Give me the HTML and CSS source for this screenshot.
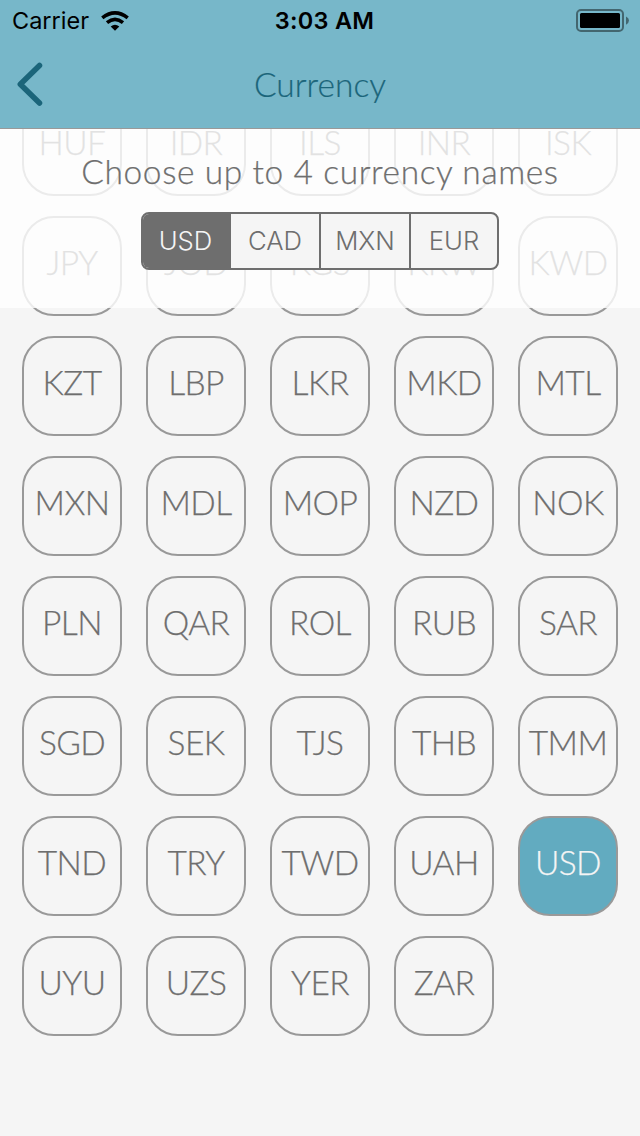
FILE: index.html
```html
<!DOCTYPE html>
<html lang="en">
<head>
<meta charset="utf-8">
<title>Currency</title>
<link rel="stylesheet" href="styles.css">
</head>
<body>
<div class="screen">
  <header class="header">
    <div class="status">
      <div class="carrier">
        <span class="carrier-name">Carrier</span>
        <svg class="wifi" width="28" height="20" viewBox="0 0 28 20">
          <path d="M14 19.8 L9.7 15.5 Q14 12 18.300 15.500 Z"/>
          <path class="arc" d="M6 11.600 Q14 5.100 22 11.600"/>
          <path class="arc" d="M1.300 6.900 Q14 -3.100 26.700 6.900"/>
        </svg>
      </div>
      <span class="time">3:03 AM</span>
      <svg class="battery" width="54" height="24" viewBox="0 0 54 24">
        <rect class="shell" x="1" y="1" width="46" height="21" rx="4"/>
        <rect x="4" y="4" width="40" height="15" rx="1.500"/>
        <path class="cap" d="M50 7.500 Q53 9 53 11.500 Q53 14 50 15.800 Z"/>
      </svg>
    </div>
    <div class="navbar">
      <svg class="back" width="28" height="44" viewBox="0 0 28 44"><path d="M23.500 3.500 L4.300 22.300 L23.500 41"/></svg>
      <h1 class="title">Currency</h1>
    </div>
  </header>
  <main class="content">
    <div class="grid">
      <div class="tile"><span>HUF</span></div><div class="tile"><span>IDR</span></div><div class="tile"><span>ILS</span></div><div class="tile"><span>INR</span></div><div class="tile"><span>ISK</span></div>
      <div class="tile"><span>JPY</span></div><div class="tile"><span>JOD</span></div><div class="tile"><span>KGS</span></div><div class="tile"><span>KRW</span></div><div class="tile"><span>KWD</span></div>
      <div class="tile"><span>KZT</span></div><div class="tile"><span>LBP</span></div><div class="tile"><span>LKR</span></div><div class="tile"><span>MKD</span></div><div class="tile"><span>MTL</span></div>
      <div class="tile"><span>MXN</span></div><div class="tile"><span>MDL</span></div><div class="tile"><span>MOP</span></div><div class="tile"><span>NZD</span></div><div class="tile"><span>NOK</span></div>
      <div class="tile"><span>PLN</span></div><div class="tile"><span>QAR</span></div><div class="tile"><span>ROL</span></div><div class="tile"><span>RUB</span></div><div class="tile"><span>SAR</span></div>
      <div class="tile"><span>SGD</span></div><div class="tile"><span>SEK</span></div><div class="tile"><span>TJS</span></div><div class="tile"><span>THB</span></div><div class="tile"><span>TMM</span></div>
      <div class="tile"><span>TND</span></div><div class="tile"><span>TRY</span></div><div class="tile"><span>TWD</span></div><div class="tile"><span>UAH</span></div><div class="tile selected"><span>USD</span></div>
      <div class="tile"><span>UYU</span></div><div class="tile"><span>UZS</span></div><div class="tile"><span>YER</span></div><div class="tile"><span>ZAR</span></div>
    </div>
    <section class="panel">
      <p class="prompt">Choose up to 4 currency names</p>
      <div class="segments">
        <span class="segment active">USD</span><span class="segment">CAD</span><span class="segment">MXN</span><span class="segment">EUR</span>
      </div>
    </section>
  </main>
</div>
</body>
</html>
```
FILE: styles.css
```css
* { box-sizing: border-box; }
body { margin: 0; background: #f5f5f5; }
.screen {
  width: 640px; height: 1136px; overflow: hidden;
  display: flex; flex-direction: column;
  font-family: Lato, sans-serif; font-weight: 300; color: #6e6e6e;
}
.header { height: 129px; background: #77b7c9; border-bottom: 1px solid #999; flex: none; }
.status {
  height: 40px; padding: 1px 10px 0 12px; color: #000;
  display: grid; grid-template-columns: 1fr auto 1fr; align-items: center;
  font-family: Inter, sans-serif; font-size: 23.500px; line-height: 40px;
}
.carrier { display: flex; align-items: center; gap: 12px; font-weight: 400; letter-spacing: 0; }
.arc { fill: none; stroke: #000; stroke-width: 3.600; }
.time { font-weight: 600; letter-spacing: 0.300px; padding-left: 7px; }
.battery { justify-self: end; }
.shell { fill: none; stroke: #43666f; stroke-width: 2; }
.cap { fill: #43666f; }
.navbar {
  height: 88px; padding: 0 16px;
  display: grid; grid-template-columns: 28px 1fr 28px; align-items: center;
}
.back path { fill: none; stroke: #1b657a; stroke-width: 5.500; stroke-linecap: round; stroke-linejoin: round; }
.title {
  margin: 0; text-align: center; font-size: 33.500px; font-weight: 300; line-height: 88px;
  height: 88px; color: #1b657a; -webkit-text-stroke: 0.200px;
}
.content { position: relative; flex: 1; overflow: hidden; }
.grid {
  margin-top: -33px; padding: 0 22px;
  display: grid; grid-template-columns: repeat(5, 100px); grid-auto-rows: 100px; gap: 20px 24px;
}
.tile {
  border: 2px solid #999; border-radius: 32px;
  display: flex; justify-content: center; font-size: 33.500px; line-height: 88px;
  letter-spacing: -0.600px; -webkit-text-stroke: 0.250px;
}
.tile.selected { background: #62abc0; color: #f5f5f5; }
.panel {
  position: absolute; inset: 0 0 auto 0; height: 179px;
  background: rgba(255, 255, 255, 0.800);
  display: flex; flex-direction: column; align-items: center;
}
.prompt {
  margin: 0; padding-top: 20px; height: 83px; font-size: 33.500px; line-height: 44px;
  white-space: nowrap; letter-spacing: 0.600px; -webkit-text-stroke: 0.250px;
}
.segments {
  width: 358px; height: 58px; border: 2px solid #6e6e6e; border-radius: 8px;
  background: #f5f5f5; overflow: hidden;
  display: grid; grid-template-columns: 86px 90px 90px 88px;
  font-family: Inter, sans-serif; font-weight: 350; font-size: 25.700px; line-height: 54px; text-align: center;
}
.segment + .segment { border-left: 2px solid #6e6e6e; }
.segment.active { background: #6e6e6e; color: #f5f5f5; padding-right: 1px; }
```
